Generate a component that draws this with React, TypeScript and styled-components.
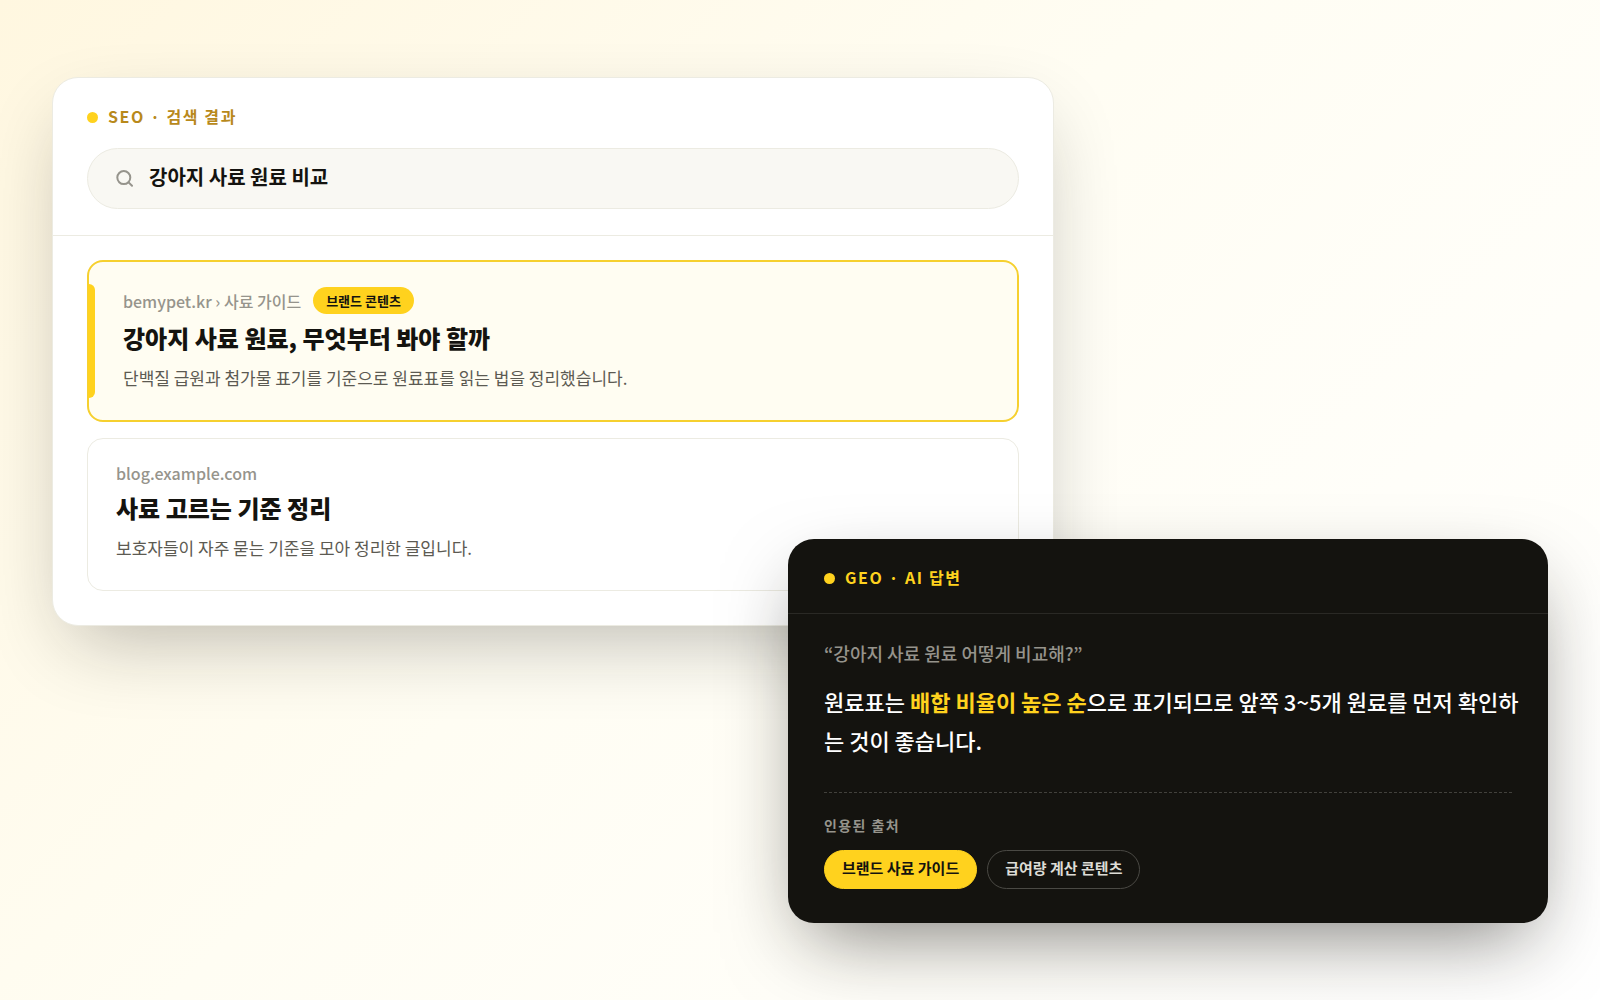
import React from "react";
import styled, { createGlobalStyle, css } from "styled-components";

const color = {
  ink: "#14130f",
  yellow: "#ffd21e",
  amber: "#b8891b",
  muted: "#96948c",
  body: "#5c5a52",
  line: "#ecebe2",
};

const GlobalStyle = createGlobalStyle`
  *, *::before, *::after { box-sizing: border-box; }
  body {
    margin: 0;
    font-family: "Noto Sans CJK KR", "Noto Sans", sans-serif;
    color: ${color.ink};
    background: #fffdf8;
  }
  h2, h3, p, ul { margin: 0; padding: 0; }
  a { color: inherit; text-decoration: none; }
`;

const Page = styled.main`
  display: flex;
  flex-direction: column;
  min-height: 100vh;
  padding: 77px 52px 76px;
  overflow: hidden;
  background: linear-gradient(135deg, #fff7e0 0%, #fffdf3 45%, #ffffff 100%);
`;

const Card = styled.section<{ $dark?: boolean }>`
  border-radius: 26px;
  ${({ $dark }) =>
    $dark
      ? css`
          position: relative;
          align-self: flex-end;
          width: min(100%, 760px);
          margin-top: -87px;
          color: #ffffff;
          background: ${color.ink};
          box-shadow: 0 30px 80px -20px rgba(20, 19, 15, 0.55);
        `
      : css`
          align-self: flex-start;
          width: min(100%, 1002px);
          border: 1px solid ${color.line};
          background: #ffffff;
          box-shadow: 0 30px 80px -20px rgba(20, 19, 15, 0.3);
        `}
`;

const CardHeader = styled.header<{ $dark?: boolean }>`
  display: flex;
  flex-direction: column;
  gap: 18px;
  padding: ${({ $dark }) => ($dark ? "26px 36px 22px" : "26px 34px")};
  border-bottom: 1px solid ${({ $dark }) => ($dark ? "#2a2925" : color.line)};
`;

const Eyebrow = styled.h2<{ $dark?: boolean }>`
  display: flex;
  align-items: center;
  gap: 10px;
  font-size: 16px;
  line-height: 24px;
  padding-bottom: 2px;
  font-weight: 700;
  letter-spacing: 0.1em;
  color: ${({ $dark }) => ($dark ? color.yellow : color.amber)};

  &::before {
    content: "";
    width: 11px;
    height: 11px;
    margin-top: 2px;
    border-radius: 50%;
    background: ${color.yellow};
  }
`;

const SearchBox = styled.label`
  display: flex;
  align-items: center;
  gap: 16px;
  padding: 14px 28px;
  border: 1px solid ${color.line};
  border-radius: 999px;
  background: #f9f8f3;

  svg { flex: none; }
`;

const SearchInput = styled.input`
  flex: 1;
  min-width: 0;
  height: 31px;
  padding: 0 0 4px;
  border: 0;
  outline: 0;
  background: none;
  font: inherit;
  font-size: 20px;
  font-weight: 700;
  color: ${color.ink};
`;

const Results = styled.div`
  display: flex;
  flex-direction: column;
  gap: 16px;
  padding: 24px 34px 34px;
`;

const Result = styled.article<{ $featured?: boolean }>`
  position: relative;
  padding: 23px 28px 28px;
  border: 1px solid ${color.line};
  border-radius: 16px;
  ${({ $featured }) =>
    $featured &&
    css`
      padding: 25px 34px 28px;
      border: 2px solid #f6d02f;
      background: #fffdf2;

      &::before {
        content: "";
        position: absolute;
        left: -1px;
        top: 22px;
        bottom: 22px;
        width: 7px;
        border-radius: 0 6px 6px 0;
        background: ${color.yellow};
      }
    `}
`;

const Crumb = styled.p`
  display: flex;
  align-items: center;
  gap: 12px;
  font-size: 16px;
  line-height: 22px;
  font-weight: 500;
  color: ${color.muted};
`;

const Tag = styled.span`
  padding: 0 13px;
  border-radius: 999px;
  font-size: 13px;
  line-height: 27px;
  font-weight: 700;
  color: ${color.ink};
  background: ${color.yellow};
`;

const ResultTitle = styled.h3`
  margin: 6px 0 7px;
  font-size: 24px;
  line-height: 36px;
  font-weight: 900;
`;

const ResultText = styled.p`
  font-size: 17px;
  line-height: 29px;
  color: ${color.body};
`;

const Answer = styled.div`
  padding: 25px 28px 34px 36px;
`;

const Question = styled.p`
  font-size: 18px;
  line-height: 28px;
  font-weight: 500;
  color: ${color.muted};
`;

const Reply = styled.p`
  margin-top: 15px;
  font-size: 22px;
  line-height: 39px;
  font-weight: 500;
  word-break: break-all;

  strong {
    font-weight: 700;
    color: ${color.yellow};
  }
`;

const Sources = styled.footer`
  margin: 32px 8px 0 0;
  padding-top: 21px;
  border-top: 1px dashed #42413c;
`;

const SourcesLabel = styled.h3`
  font-size: 14px;
  line-height: 22px;
  font-weight: 700;
  letter-spacing: 0.1em;
  color: ${color.muted};
`;

const ChipRow = styled.ul`
  display: flex;
  flex-wrap: wrap;
  gap: 10px;
  margin-top: 14px;
  list-style: none;
`;

const Chip = styled.a<{ $primary?: boolean }>`
  display: block;
  padding: 0 17px 4px;
  border: 1px solid ${({ $primary }) => ($primary ? color.yellow : "#4a4944")};
  border-radius: 999px;
  font-size: 15px;
  line-height: 33px;
  font-weight: 700;
  color: ${({ $primary }) => ($primary ? color.ink : "#dddcd6")};
  background: ${({ $primary }) => ($primary ? color.yellow : "transparent")};
`;

const SearchIcon = () => (
  <svg width="17" height="17" viewBox="0 0 17 17" fill="none" stroke="#96948c" strokeWidth="2" strokeLinecap="round" aria-hidden="true">
    <circle cx="7.8" cy="7.6" r="6.5" />
    <path d="M12.6 12.4l3.4 3.4" />
  </svg>
);

export default function App() {
  return (
    <>
      <GlobalStyle />
      <Page>
        <Card>
          <CardHeader>
            <Eyebrow>SEO · 검색 결과</Eyebrow>
            <SearchBox>
              <SearchIcon />
              <SearchInput type="text" aria-label="검색" defaultValue="강아지 사료 원료 비교" />
            </SearchBox>
          </CardHeader>
          <Results>
            <Result $featured>
              <Crumb>
                bemypet.kr › 사료 가이드 <Tag>브랜드 콘텐츠</Tag>
              </Crumb>
              <ResultTitle>
                <a href="#guide">강아지 사료 원료, 무엇부터 봐야 할까</a>
              </ResultTitle>
              <ResultText>단백질 급원과 첨가물 표기를 기준으로 원료표를 읽는 법을 정리했습니다.</ResultText>
            </Result>
            <Result>
              <Crumb>blog.example.com</Crumb>
              <ResultTitle>
                <a href="#blog">사료 고르는 기준 정리</a>
              </ResultTitle>
              <ResultText>보호자들이 자주 묻는 기준을 모아 정리한 글입니다.</ResultText>
            </Result>
          </Results>
        </Card>

        <Card $dark>
          <CardHeader $dark>
            <Eyebrow $dark>GEO · AI 답변</Eyebrow>
          </CardHeader>
          <Answer>
            <Question>“강아지 사료 원료 어떻게 비교해?”</Question>
            <Reply>
              원료표는 <strong>배합 비율이 높은 순</strong>으로 표기되므로 앞쪽 3~5개 원료를 먼저 확인하는 것이 좋습니다.
            </Reply>
            <Sources>
              <SourcesLabel>인용된 출처</SourcesLabel>
              <ChipRow>
                <li>
                  <Chip $primary href="#brand-guide">브랜드 사료 가이드</Chip>
                </li>
                <li>
                  <Chip href="#feeding">급여량 계산 콘텐츠</Chip>
                </li>
              </ChipRow>
            </Sources>
          </Answer>
        </Card>
      </Page>
    </>
  );
}
